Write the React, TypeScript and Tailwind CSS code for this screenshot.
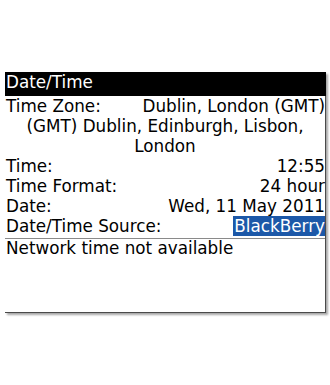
export default function App() {
  const rows: { label: string; value: string; selected?: boolean }[] = [
    { label: 'Time:', value: '12:55' },
    { label: 'Time Format:', value: '24 hour' },
    { label: 'Date:', value: 'Wed, 11 May 2011' },
    { label: 'Date/Time Source:', value: 'BlackBerry', selected: true },
  ];

  return (
    <div
      className="w-[330px] h-[385px] bg-white pt-[72px] pl-[5px]"
      style={{ fontFamily: '"DejaVu Sans", "Liberation Sans", sans-serif' }}
    >
      <div className="w-[321px] h-[241px] bg-white border-r border-b border-[#4a4a4a] shadow-[2px_2px_2px_rgba(0,0,0,0.35)] text-[16.8px] leading-[20px] text-black">
        <div className="h-[24px] bg-black text-white pl-[1px] mr-[-1px]">Date/Time</div>

        <div className="flex justify-between pl-[1px]">
          <span>Time Zone:</span>
          <span>Dublin, London (GMT)</span>
        </div>
        <div className="text-center">
          (GMT) Dublin, Edinburgh, Lisbon,
          <br />
          London
        </div>

        {rows.map((r) => (
          <div key={r.label} className="flex justify-between pl-[1px]">
            <span>{r.label}</span>
            <span className={r.selected ? 'bg-[#1c58a8] text-white pl-[1px]' : ''}>{r.value}</span>
          </div>
        ))}

        <div className="h-[2px] border-b border-[#8a8a8a] mt-[1px]" />
        <div className="pl-[1px] mt-[-1px]">Network time not available</div>
      </div>
    </div>
  );
}
